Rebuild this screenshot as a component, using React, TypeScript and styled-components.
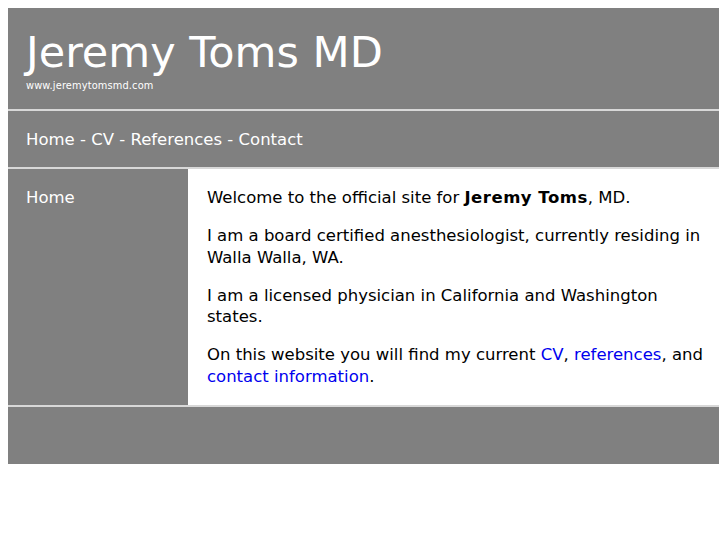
import React from 'react';
import styled, { createGlobalStyle } from 'styled-components';

const GlobalStyle = createGlobalStyle`
    body {
        margin: 8px;
        background: #ffffff;
        font-family: "DejaVu Sans", Verdana, sans-serif;
    }
`;

const Page = styled.div`
    width: 718px;
    background: #808080;
    border-right: 1px solid #d8d8d8;
`;

const Header = styled.header`
    height: 82px;
    padding: 19px 18px 0;
    color: #ffffff;
    border-bottom: 2px solid #d8d8d8;
`;

const Title = styled.h1`
    margin: 0;
    font-size: 43px;
    font-weight: normal;
    line-height: 50px;
`;

const Url = styled.div`
    margin-top: 3px;
    font-size: 9.8px;
    line-height: 12px;
    letter-spacing: 0.15px;
`;

const Nav = styled.nav`
    height: 56px;
    padding: 0 18px;
    display: flex;
    align-items: center;
    font-size: 16.5px;
    color: #ffffff;
    border-bottom: 2px solid #d8d8d8;
`;

const Body = styled.div`
    display: flex;
    min-height: 236px;
    border-bottom: 2px solid #d8d8d8;
`;

const Side = styled.aside`
    width: 180px;
    padding: 18px 18px;
    box-sizing: border-box;
    color: #ffffff;
    font-size: 16.5px;
    line-height: 21.5px;
`;

const Content = styled.main`
    flex: 1;
    background: #ffffff;
    padding: 18px 19px 17px;
    font-size: 16.5px;
    line-height: 21.5px;
    color: #000000;
`;

const Para = styled.p`
    margin: 0 0 16.5px;
    &:last-child {
        margin-bottom: 0;
    }
`;

const Strong = styled.b`
    letter-spacing: 0.5px;
`;

const Link = styled.a`
    color: #0000ee;
    text-decoration: none;
`;

const Footer = styled.footer`
    height: 57px;
`;

export default function App() {
    return (
        <>
            <GlobalStyle />
            <Page>
                <Header>
                    <Title>Jeremy Toms MD</Title>
                    <Url>www.jeremytomsmd.com</Url>
                </Header>
                <Nav>Home - CV - References - Contact</Nav>
                <Body>
                    <Side>Home</Side>
                    <Content>
                        <Para>Welcome to the official site for <Strong>Jeremy Toms</Strong>, MD.</Para>
                        <Para>I am a board certified anesthesiologist, currently residing in Walla Walla, WA.</Para>
                        <Para>I am a licensed physician in California and Washington states.</Para>
                        <Para>
                            On this website you will find my current <Link href="#">CV</Link>,{' '}
                            <Link href="#">references</Link>, and <Link href="#">contact information</Link>.
                        </Para>
                    </Content>
                </Body>
                <Footer />
            </Page>
        </>
    );
}
